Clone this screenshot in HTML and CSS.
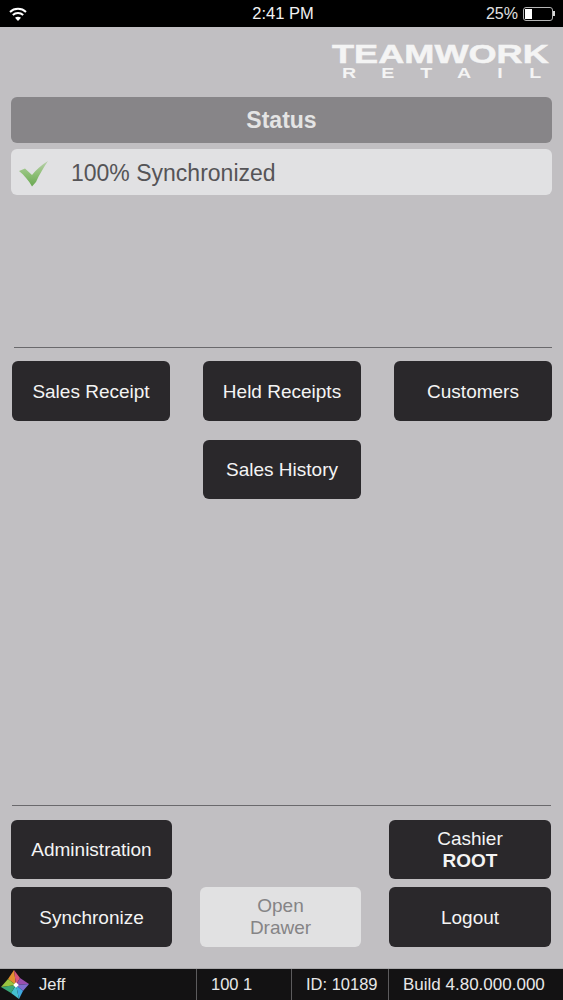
FILE: index.html
```html
<!DOCTYPE html>
<html>
<head>
<title>Teamwork Retail</title>
<meta name="viewport" content="width=device-width, initial-scale=1">
<link rel="stylesheet" href="styles.css">
</head>
<body>

<div class="statusbar">
  <span class="statusbar-side">
    <svg class="wifi" width="18" height="14" viewBox="0 0 18 14">
      <path d="M1 5C5.4 0.8 12.6 0.8 17 5" fill="none" stroke="#fff" stroke-width="2"/>
      <path d="M3.8 8C6.8 5.2 11.2 5.2 14.2 8" fill="none" stroke="#fff" stroke-width="2"/>
      <path d="M9 14L6 10.8C7.7 9.4 10.3 9.4 12 10.8Z" fill="#fff"/>
    </svg>
  </span>
  <span class="clock">2:41 PM</span>
  <span class="statusbar-side battery-side">
    25%
    <span class="battery"><span class="battery-level"></span></span>
  </span>
</div>

<div class="logo-row">
  <div class="logo">
    <div class="logo-top">TEAMWORK</div>
    <div class="logo-bottom"><span>R</span><span>E</span><span>T</span><span>A</span><span>I</span><span>L</span></div>
  </div>
</div>

<div class="status-head">Status</div>
<div class="status-line">
  <svg width="30" height="26" viewBox="0 0 30 26">
    <defs>
      <linearGradient id="tick" x1="0" y1="0" x2="0" y2="1">
        <stop offset="0" stop-color="#b9cfac"/>
        <stop offset="0.5" stop-color="#8fc077"/>
        <stop offset="1" stop-color="#6aa752"/>
      </linearGradient>
    </defs>
    <path d="M0 10L6 7.5L13 14C17 9 22 4 29 0C25 6 20 14 17 21L13 25.5C10 20 5 14 0 10Z" fill="url(#tick)"/>
  </svg>
  <span>100% Synchronized</span>
</div>

<hr class="rule rule-top">

<div class="menu">
  <button class="btn">Sales Receipt</button>
  <button class="btn">Held Receipts</button>
  <button class="btn">Customers</button>
  <button class="btn menu-center">Sales History</button>
</div>

<div class="spacer"></div>

<hr class="rule rule-bottom">

<div class="actions">
  <button class="btn">Administration</button>
  <span></span>
  <button class="btn two-line">Cashier<br><b>ROOT</b></button>
  <button class="btn">Synchronize</button>
  <button class="btn btn-off two-line">Open<br>Drawer</button>
  <button class="btn">Logout</button>
</div>

<div class="footer">
  <div class="footer-cell footer-user">
    <svg width="30" height="30" viewBox="0 0 30 30">
      <path d="M14 0L8 9L16 15Z" fill="#e3902f"/>
      <path d="M14 0L20 8L16 15Z" fill="#d9567a"/>
      <path d="M29 14L20 8L16 15Z" fill="#9a4fb0"/>
      <path d="M29 14L23 21L16 15Z" fill="#7f6fd0"/>
      <path d="M19 29L23 21L16 15Z" fill="#3fa8e0"/>
      <path d="M19 29L11 23L16 15Z" fill="#45c0d0"/>
      <path d="M1 17L11 23L16 15Z" fill="#3aa878"/>
      <path d="M1 17L8 9L16 15Z" fill="#9ac43f"/>
      <rect x="14" y="13" width="4" height="4" fill="#fff" transform="rotate(45 16 15)"/>
    </svg>
    <span>Jeff</span>
  </div>
  <div class="footer-cell footer-store">100 1</div>
  <div class="footer-cell footer-id">ID: 10189</div>
  <div class="footer-cell footer-build">Build 4.80.000.000</div>
</div>

</body>
</html>
```

FILE: styles.css
```css
html, body {
  margin: 0;
  height: 1000px;
}

body {
  display: flex;
  flex-direction: column;
  overflow: hidden;
  background-color: #c1bfc2;
  font-family: "Liberation Sans", Arial, sans-serif;
}

/* Phone status bar */
.statusbar {
  display: grid;
  grid-template-columns: 1fr auto 1fr;
  align-items: center;
  height: 27px;
  padding: 0 10px 0 9px;
  background-color: #000;
  color: #f2f2f2;
}

.clock {
  padding-left: 4px;
  font-size: 16.5px;
}

.wifi {
  display: block;
  margin-top: 1px;
}

.battery-side {
  display: flex;
  align-items: center;
  justify-content: flex-end;
  gap: 5px;
  font-size: 16px;
  color: #e0e0e0;
}

.battery {
  position: relative;
  display: block;
  box-sizing: border-box;
  width: 30px;
  height: 14px;
  padding: 1px;
  border: 1px solid #b5b5b5;
  border-radius: 3px;
}

/* battery nub */
.battery:after {
  content: "";
  position: absolute;
  top: 3px;
  right: -3px;
  width: 2px;
  height: 5px;
  background-color: #d8d8d8;
}

.battery-level {
  display: block;
  width: 7px;
  height: 100%;
  background-color: #fff;
}

/* Logo */
.logo-row {
  display: flex;
  justify-content: flex-end;
  height: 70px;
  padding-right: 14px;
}

.logo {
  width: 217px;
  margin-top: 18px;
  color: #f4f4f4;
  font-weight: bold;
}

.logo-top {
  width: fit-content;
  font-size: 26px;
  line-height: 19px;
  -webkit-text-stroke: 0.5px #f4f4f4;
  transform: scaleX(1.39);
  transform-origin: left;
  white-space: nowrap;
}

.logo-bottom {
  display: flex;
  justify-content: space-between;
  margin-top: 4px;
  padding: 0 9px 0 12px;
  font-size: 14px;
  line-height: 11px;
}

.logo-bottom span {
  transform: scaleX(1.4);
}

/* Status panel */
.status-head,
.status-line {
  height: 46px;
  margin: 0 11px;
  border-radius: 6px;
}

.status-head {
  background-color: #878588;
  color: #e4e4e4;
  font-size: 23px;
  font-weight: bold;
  line-height: 46px;
  text-align: center;
}

.status-line {
  display: flex;
  align-items: center;
  gap: 22px;
  margin-top: 6px;
  padding-left: 8px;
  background-color: #e1e1e3;
  color: #555457;
  font-size: 23px;
}

.status-line span {
  padding-top: 2px;
}

.status-line svg {
  margin-top: 3px;
}

.rule {
  height: 1px;
  margin: 0;
  border: none;
  background-color: #6a696c;
}

.rule-top {
  margin: 152px 11px 13px 14px;
}

.rule-bottom {
  margin: 0 12px 14px 12px;
}

/* Buttons */
.btn {
  padding: 0;
  border: none;
  border-radius: 6px;
  background-color: #2a282b;
  color: #f4f4f4;
  font-family: inherit;
  font-size: 19px;
  line-height: 21px;
}

.btn b {
  font-size: 19px;
}

.two-line {
  line-height: 22px;
}

.btn-off {
  background-color: #e1e1e2;
  color: #858486;
}

.menu {
  display: grid;
  grid-template-columns: 158px 158px 158px;
  grid-template-rows: 60px 59px;
  column-gap: 33px;
  row-gap: 19px;
  padding: 0 11px 0 12px;
}

.menu-center {
  grid-column: 2;
}

.spacer {
  flex: 1;
}

.actions {
  display: grid;
  grid-template-columns: 161px 161px 162px;
  grid-template-rows: 59px 60px;
  justify-content: space-between;
  row-gap: 8px;
  padding: 0 12px 0 11px;
  margin-bottom: 21px;
}

/* Footer */
.footer {
  display: flex;
  flex: none;
  height: 32px;
  border-top: 1px solid #a9a8aa;
  box-sizing: border-box;
  background-color: #131213;
  color: #e8e8e8;
  font-size: 16.5px;
}

.footer-cell {
  display: flex;
  align-items: center;
  box-sizing: border-box;
  height: 100%;
  border-right: 1px solid #5c5b5d;
}

.footer-user {
  gap: 9px;
  width: 197px;
}

.footer-store {
  width: 95px;
  padding-left: 14px;
}

.footer-id {
  width: 97px;
  padding-left: 14px;
}

.footer-build {
  flex: 1;
  padding-left: 14px;
  border-right: none;
  font-size: 17px;
  white-space: nowrap;
}
```
